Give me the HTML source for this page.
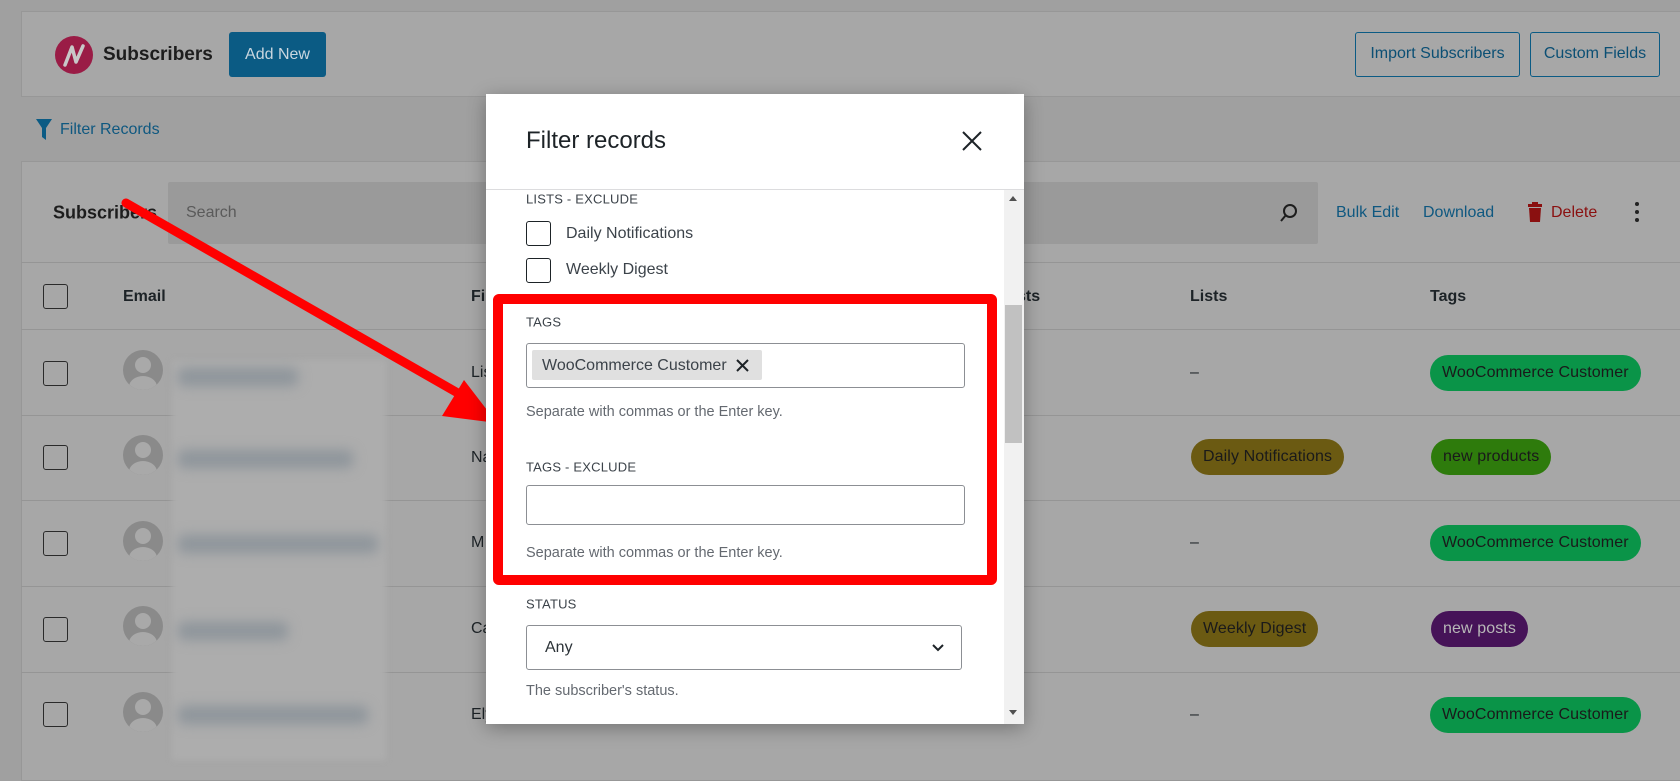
<!DOCTYPE html>
<html><head><meta charset="utf-8"><style>
*{box-sizing:border-box;margin:0;padding:0}
body{width:1680px;height:759px;overflow:hidden;background:#a0a0a0;font-family:"Liberation Sans",sans-serif;position:relative;color:#1d2327}
.abs{position:absolute}
.card{position:absolute;background:#a7a7a7;border:1px solid #979797}
.t{position:absolute;white-space:nowrap;transform:translateY(-50%)}
.cb{position:absolute;width:25px;height:25px;border:1.5px solid #2a2a2a;border-radius:3px}
.line{position:absolute;left:21px;right:0;height:1px;background:#959595}
.av{position:absolute;width:40px;height:40px;border-radius:50%;background:#8a8a8a;overflow:hidden}
.av:before{content:"";position:absolute;left:12px;top:7px;width:16px;height:16px;border-radius:50%;background:#a9a9a9}
.av:after{content:"";position:absolute;left:6px;top:26px;width:28px;height:22px;border-radius:50%;background:#a9a9a9}
.blur{position:absolute;background:#8e959b;filter:blur(6px);height:18px;border-radius:6px}
.badge{position:absolute;height:36px;border-radius:18px;font-size:16px;line-height:36px;padding:0 12px;color:#1a1a1a;white-space:nowrap;letter-spacing:.1px}
.g{background:#0a9448}.o{background:#6b5a12}.lg{background:#2e7b0c}.p{background:#461358;color:#b8b8b8}
.m{position:absolute;left:486px;top:94px;width:538px;height:630px;background:#fff;box-shadow:0 4px 18px rgba(0,0,0,.3)}
.lab{position:absolute;font-size:13px;color:#3c434a;transform:translateY(-50%);letter-spacing:.2px}
.help{position:absolute;font-size:14.5px;color:#646970;transform:translateY(-50%)}
.in{position:absolute;border:1px solid #8c8f94;border-radius:3px;background:#fff}
</style></head><body>
<div class="card" style="left:21px;top:11px;width:1680px;height:86px"></div>
<div class="abs" style="left:55px;top:36px;width:38px;height:38px;border-radius:50%;background:#9a1c46"></div>
<svg class="abs" style="left:55px;top:36px" width="38" height="38"><path d="M10 29 L17 11 L21 26 L28 10" stroke="#c8c8c8" stroke-width="3.5" fill="none" stroke-linecap="round" stroke-linejoin="round"/></svg>
<div class="t" style="left:103px;top:55px;font-size:19px;font-weight:600;color:#1d1d1d">Subscribers</div>
<div class="abs" style="left:229px;top:32px;width:97px;height:45px;background:#0b5b84;border-radius:3px;color:#c9d6df;font-size:16px;line-height:45px;text-align:center">Add New</div>
<div class="abs" style="left:1355px;top:32px;width:165px;height:45px;border:1.5px solid #0b5b84;border-radius:3px;color:#0b4f74;font-size:16px;line-height:42px;text-align:center">Import Subscribers</div>
<div class="abs" style="left:1530px;top:32px;width:130px;height:45px;border:1.5px solid #0b5b84;border-radius:3px;color:#0b4f74;font-size:16px;line-height:42px;text-align:center">Custom Fields</div>
<svg class="abs" style="left:36px;top:119px" width="16" height="22"><path d="M0 0 H16 L10 9 V21 L6 18 V9 Z" fill="#0b5b84"/></svg>
<div class="t" style="left:60px;top:130px;font-size:16px;color:#0f5880">Filter Records</div>
<div class="card" style="left:21px;top:161px;width:1680px;height:620px"></div>
<div class="t" style="left:53px;top:213px;font-size:18px;font-weight:600;color:#1d1d1d">Subscribers</div>
<div class="abs" style="left:168px;top:182px;width:1150px;height:62px;background:#9a9a9a;border-radius:2px"></div>
<div class="t" style="left:186px;top:213px;font-size:16px;color:#5a5a5a">Search</div>
<svg class="abs" style="left:1279px;top:203px" width="20" height="20"><circle cx="11" cy="8" r="6" stroke="#1d1d1d" stroke-width="2" fill="none"/><path d="M7 12 L2 18" stroke="#1d1d1d" stroke-width="2"/></svg>
<div class="t" style="left:1336px;top:213px;font-size:16px;color:#0f5880">Bulk Edit</div>
<div class="t" style="left:1423px;top:213px;font-size:16px;color:#0f5880">Download</div>
<svg class="abs" style="left:1527px;top:202px" width="16" height="20"><rect x="1" y="2" width="14" height="3" fill="#8a1010"/><rect x="5" y="0" width="6" height="3" fill="#8a1010"/><path d="M2 6 H14 L13 20 H3 Z" fill="#8a1010"/></svg>
<div class="t" style="left:1551px;top:213px;font-size:16px;color:#8a1010">Delete</div>
<div class="abs" style="left:1635px;top:202px;width:4px;height:4px;border-radius:50%;background:#222;box-shadow:0 8px 0 #222,0 16px 0 #222"></div>
<div class="line" style="top:262px"></div>
<div class="cb" style="left:43px;top:284px"></div>
<div class="t" style="left:123px;top:297px;font-size:16px;font-weight:700">Email</div>
<div class="t" style="left:471px;top:297px;font-size:16px;font-weight:700">Fi</div>
<div class="t" style="left:1017px;top:297px;font-size:16px;font-weight:700">sts</div>
<div class="t" style="left:1190px;top:297px;font-size:16px;font-weight:700">Lists</div>
<div class="t" style="left:1430px;top:297px;font-size:16px;font-weight:700">Tags</div>
<div class="line" style="top:329px"></div>
<div class="line" style="top:415px"></div>
<div class="line" style="top:500px"></div>
<div class="line" style="top:586px"></div>
<div class="line" style="top:672px"></div>
<div class="abs" style="left:172px;top:360px;width:214px;height:400px;background:#adadad;filter:blur(3px)"></div>
<div class="cb" style="left:43px;top:361px"></div>
<div class="cb" style="left:43px;top:445px"></div>
<div class="cb" style="left:43px;top:531px"></div>
<div class="cb" style="left:43px;top:617px"></div>
<div class="cb" style="left:43px;top:702px"></div>
<div class="av" style="left:123px;top:350px"></div>
<div class="av" style="left:123px;top:435px"></div>
<div class="av" style="left:123px;top:521px"></div>
<div class="av" style="left:123px;top:606px"></div>
<div class="av" style="left:123px;top:692px"></div>
<div class="blur" style="left:178px;top:368px;width:120px"></div>
<div class="blur" style="left:178px;top:450px;width:175px"></div>
<div class="blur" style="left:178px;top:535px;width:200px"></div>
<div class="blur" style="left:178px;top:622px;width:110px"></div>
<div class="blur" style="left:178px;top:706px;width:190px"></div>
<div class="t" style="left:471px;top:373px;font-size:16px">Lis</div>
<div class="t" style="left:471px;top:458px;font-size:16px">Na</div>
<div class="t" style="left:471px;top:543px;font-size:16px">M</div>
<div class="t" style="left:471px;top:629px;font-size:16px">Ca</div>
<div class="t" style="left:471px;top:715px;font-size:16px">Ely</div>
<div class="t" style="left:1190px;top:373px;font-size:16px">–</div>
<div class="t" style="left:1190px;top:543px;font-size:16px">–</div>
<div class="t" style="left:1190px;top:715px;font-size:16px">–</div>
<div class="badge g" style="left:1430px;top:355px">WooCommerce Customer</div>
<div class="badge o" style="left:1191px;top:439px">Daily Notifications</div>
<div class="badge lg" style="left:1431px;top:439px">new products</div>
<div class="badge g" style="left:1430px;top:525px">WooCommerce Customer</div>
<div class="badge o" style="left:1191px;top:611px">Weekly Digest</div>
<div class="badge p" style="left:1431px;top:611px">new posts</div>
<div class="badge g" style="left:1430px;top:697px">WooCommerce Customer</div>
<svg class="abs" style="left:0;top:0" width="1680" height="759"><path d="M126 203 L470 400" stroke="#ff0000" stroke-width="9" stroke-linecap="round"/><path d="M497 423 L442 416 L464 380 Z" fill="#ff0000"/></svg>
<div class="m">
<div class="t" style="left:40px;top:47px;font-size:24px;color:#1d2327">Filter records</div>
<svg class="abs" style="left:476px;top:37px" width="20" height="20"><path d="M1 1 L19 19 M19 1 L1 19" stroke="#1d2327" stroke-width="2"/></svg>
<div class="abs" style="left:0;top:95px;width:538px;height:1px;background:#dcdcde"></div>
<div class="abs" style="left:518px;top:96px;width:20px;height:534px;background:#f1f1f1"></div>
<div class="abs" style="left:519px;top:211px;width:17px;height:138px;background:#c1c1c1"></div>
<div class="abs" style="left:523px;top:102px;border:4px solid transparent;border-bottom:5px solid #505050;border-top:0"></div>
<div class="abs" style="left:523px;top:616px;border:4px solid transparent;border-top:5px solid #505050;border-bottom:0"></div>
<div class="lab" style="left:40px;top:105px">LISTS - EXCLUDE</div>
<div class="cb" style="left:40px;top:127px;border-width:1px;border-color:#1d2327"></div>
<div class="t" style="left:80px;top:140px;font-size:16px;color:#3c434a">Daily Notifications</div>
<div class="cb" style="left:40px;top:164px;border-width:1px;border-color:#1d2327"></div>
<div class="t" style="left:80px;top:176px;font-size:16px;color:#3c434a">Weekly Digest</div>
<div class="abs" style="left:7px;top:200px;width:504px;height:291px;border:10px solid #ff0000;border-radius:6px"></div>
<div class="lab" style="left:40px;top:228px">TAGS</div>
<div class="in" style="left:40px;top:249px;width:439px;height:45px"></div>
<div class="abs" style="left:46px;top:256px;width:230px;height:30px;background:#e0e0e0;border-radius:2px"></div>
<div class="t" style="left:56px;top:272px;font-size:16px;color:#3c434a">WooCommerce Customer</div>
<svg class="abs" style="left:250px;top:265px" width="13" height="13"><path d="M1 1 L12 12 M12 1 L1 12" stroke="#1d2327" stroke-width="2"/></svg>
<div class="help" style="left:40px;top:318px">Separate with commas or the Enter key.</div>
<div class="lab" style="left:40px;top:373px">TAGS - EXCLUDE</div>
<div class="in" style="left:40px;top:391px;width:439px;height:40px"></div>
<div class="help" style="left:40px;top:459px">Separate with commas or the Enter key.</div>
<div class="lab" style="left:40px;top:510px">STATUS</div>
<div class="in" style="left:40px;top:531px;width:436px;height:45px"></div>
<div class="t" style="left:59px;top:554px;font-size:16px;color:#2c3338">Any</div>
<svg class="abs" style="left:446px;top:550px" width="12" height="8"><path d="M1 1 L6 6 L11 1" stroke="#1d2327" stroke-width="2" fill="none"/></svg>
<div class="help" style="left:40px;top:597px">The subscriber's status.</div>
</div>
</body></html>
